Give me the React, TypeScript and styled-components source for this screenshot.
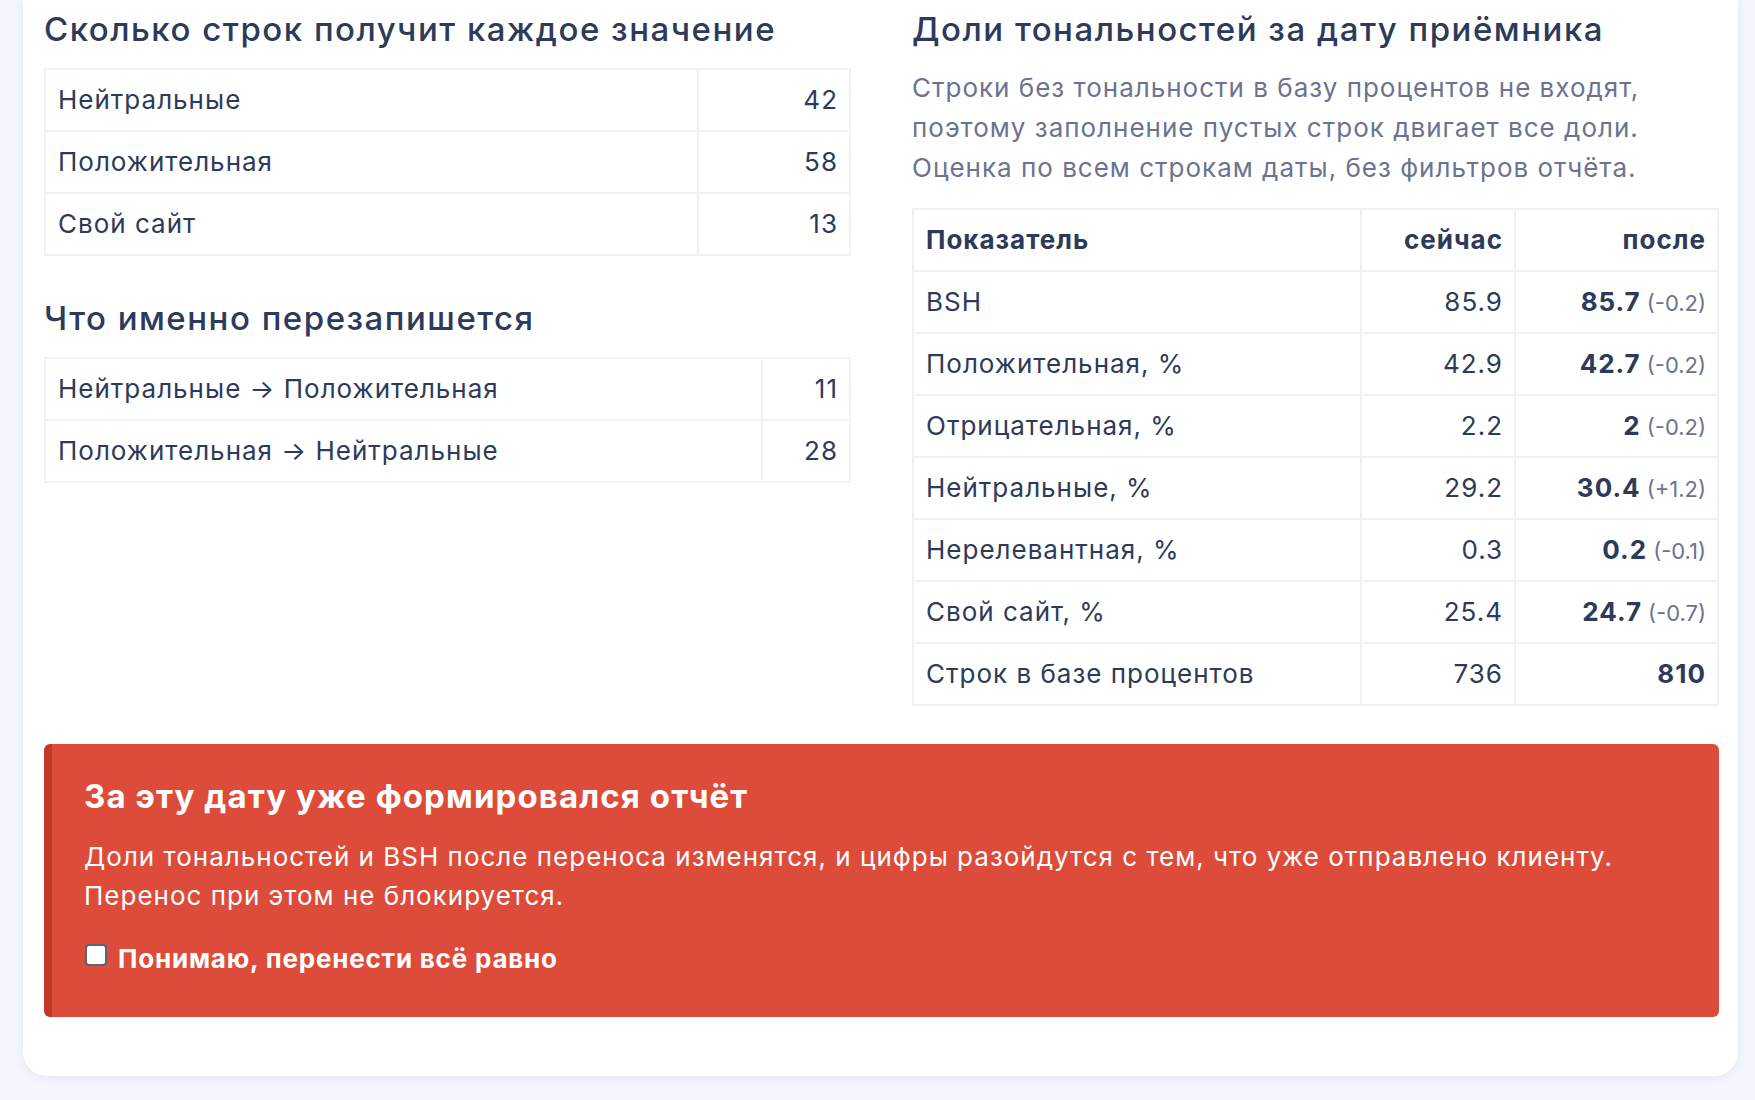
import React, { useState } from "react";
import styled, { createGlobalStyle } from "styled-components";

const GlobalStyle = createGlobalStyle`
  html, body {
    margin: 0;
    padding: 0;
    background: #f3f6fd;
  }
  body {
    font-family: Inter, "Noto Sans", "Liberation Sans", sans-serif;
    color: #2e3a59;
  }
  * { box-sizing: border-box; }
`;

const Page = styled.div`
  padding: 0 17px 24px 23px;
`;

const Card = styled.div`
  background: #ffffff;
  border-radius: 0 0 24px 24px;
  box-shadow: 0 2px 10px rgba(40, 60, 140, 0.07);
  padding: 10px 19px 59px 21px;
`;

const Columns = styled.div`
  display: grid;
  grid-template-columns: 1fr 1fr;
  column-gap: 61px;
  align-items: start;
`;

const Column = styled.div`
  display: flex;
  flex-direction: column;
  gap: 43px;
`;

const Section = styled.section`
  display: flex;
  flex-direction: column;
  gap: 20px;
`;

const Title = styled.h2`
  margin: 0;
  font-size: 33px;
  line-height: 38px;
  font-weight: 500;
  letter-spacing: 1.5px;
  color: #2e3a59;
`;

const Note = styled.p`
  margin: 0;
  font-size: 26px;
  line-height: 40px;
  letter-spacing: 1px;
  color: #6b7390;
`;

const Table = styled.table`
  width: 100%;
  border-collapse: collapse;
  font-size: 26px;
  line-height: 30px;
  letter-spacing: 1px;
`;

const Cell = styled.td<{ $num?: boolean; $w?: number }>`
  border: 2px solid #f0f2f7;
  padding: 15px ${(p) => (p.$num ? "11px" : "12px")} 15px 12px;
  text-align: ${(p) => (p.$num ? "right" : "left")};
  width: ${(p) => (p.$w ? `${p.$w}px` : "auto")};
  color: #2e3a59;
  white-space: nowrap;
`;

const HeadCell = styled(Cell).attrs({ as: "th" })`
  font-weight: 700;
`;

const Strong = styled.b`
  font-weight: 700;
`;

const Delta = styled.span`
  font-size: 22px;
  line-height: 1;
  letter-spacing: 0;
  color: #6b7390;
  margin-left: 6px;
`;

const Alert = styled.div`
  margin-top: 38px;
  background: #dd4c3a;
  border-left: 8px solid #c33727;
  border-radius: 6px;
  padding: 32px 32px 39px 32px;
  color: #ffffff;
`;

const AlertTitle = styled.h3`
  margin: 0 0 21px;
  font-size: 33px;
  line-height: 40px;
  font-weight: 700;
  letter-spacing: 1.1px;
`;

const AlertText = styled.p`
  margin: 0 0 24px;
  font-size: 26px;
  line-height: 39px;
  letter-spacing: 1px;
`;

const Confirm = styled.label`
  display: flex;
  align-items: flex-start;
  gap: 11px;
  font-size: 26px;
  line-height: 39px;
  font-weight: 700;
  letter-spacing: 0.8px;
  cursor: pointer;
`;

const Check = styled.input`
  appearance: none;
  width: 22px;
  height: 22px;
  margin: 5px 0 0 1px;
  flex: none;
  border: 2px solid #5f6275;
  border-radius: 4px;
  background: #ffffff;
  cursor: pointer;
  position: relative;

  &:checked::after {
    content: "";
    position: absolute;
    left: 5px;
    top: 1px;
    width: 6px;
    height: 11px;
    border: solid #c33727;
    border-width: 0 3px 3px 0;
    transform: rotate(45deg);
  }
`;

const counts = [
  ["Нейтральные", 42],
  ["Положительная", 58],
  ["Свой сайт", 13],
] as const;

const rewrites = [
  ["Нейтральные → Положительная", 11],
  ["Положительная → Нейтральные", 28],
] as const;

const shares: { name: string; now: string; after: string; delta?: string }[] = [
  { name: "BSH", now: "85.9", after: "85.7", delta: "(-0.2)" },
  { name: "Положительная, %", now: "42.9", after: "42.7", delta: "(-0.2)" },
  { name: "Отрицательная, %", now: "2.2", after: "2", delta: "(-0.2)" },
  { name: "Нейтральные, %", now: "29.2", after: "30.4", delta: "(+1.2)" },
  { name: "Нерелевантная, %", now: "0.3", after: "0.2", delta: "(-0.1)" },
  { name: "Свой сайт, %", now: "25.4", after: "24.7", delta: "(-0.7)" },
  { name: "Строк в базе процентов", now: "736", after: "810" },
];

export default function App() {
  const [agreed, setAgreed] = useState(false);

  return (
    <Page>
      <GlobalStyle />
      <Card>
        <Columns>
          <Column>
            <Section>
              <Title>Сколько строк получит каждое значение</Title>
              <Table>
                <tbody>
                  {counts.map(([label, n]) => (
                    <tr key={label}>
                      <Cell>{label}</Cell>
                      <Cell $num $w={152}>{n}</Cell>
                    </tr>
                  ))}
                </tbody>
              </Table>
            </Section>
            <Section>
              <Title>Что именно перезапишется</Title>
              <Table>
                <tbody>
                  {rewrites.map(([label, n]) => (
                    <tr key={label}>
                      <Cell>{label}</Cell>
                      <Cell $num $w={88}>{n}</Cell>
                    </tr>
                  ))}
                </tbody>
              </Table>
            </Section>
          </Column>

          <Column>
            <Section>
              <Title>Доли тональностей за дату приёмника</Title>
              <Note>
                Строки без тональности в базу процентов не входят, поэтому заполнение пустых строк двигает все доли.
                Оценка по всем строкам даты, без фильтров отчёта.
              </Note>
              <Table>
                <thead>
                  <tr>
                    <HeadCell>Показатель</HeadCell>
                    <HeadCell $num $w={154}>сейчас</HeadCell>
                    <HeadCell $num $w={203}>после</HeadCell>
                  </tr>
                </thead>
                <tbody>
                  {shares.map((r) => (
                    <tr key={r.name}>
                      <Cell>{r.name}</Cell>
                      <Cell $num>{r.now}</Cell>
                      <Cell $num>
                        <Strong>{r.after}</Strong>
                        {r.delta && <Delta>{r.delta}</Delta>}
                      </Cell>
                    </tr>
                  ))}
                </tbody>
              </Table>
            </Section>
          </Column>
        </Columns>

        <Alert>
          <AlertTitle>За эту дату уже формировался отчёт</AlertTitle>
          <AlertText>
            Доли тональностей и BSH после переноса изменятся, и цифры разойдутся с тем, что уже отправлено клиенту.
            <br />
            Перенос при этом не блокируется.
          </AlertText>
          <Confirm>
            <Check type="checkbox" checked={agreed} onChange={(e) => setAgreed(e.target.checked)} />
            Понимаю, перенести всё равно
          </Confirm>
        </Alert>
      </Card>
    </Page>
  );
}
